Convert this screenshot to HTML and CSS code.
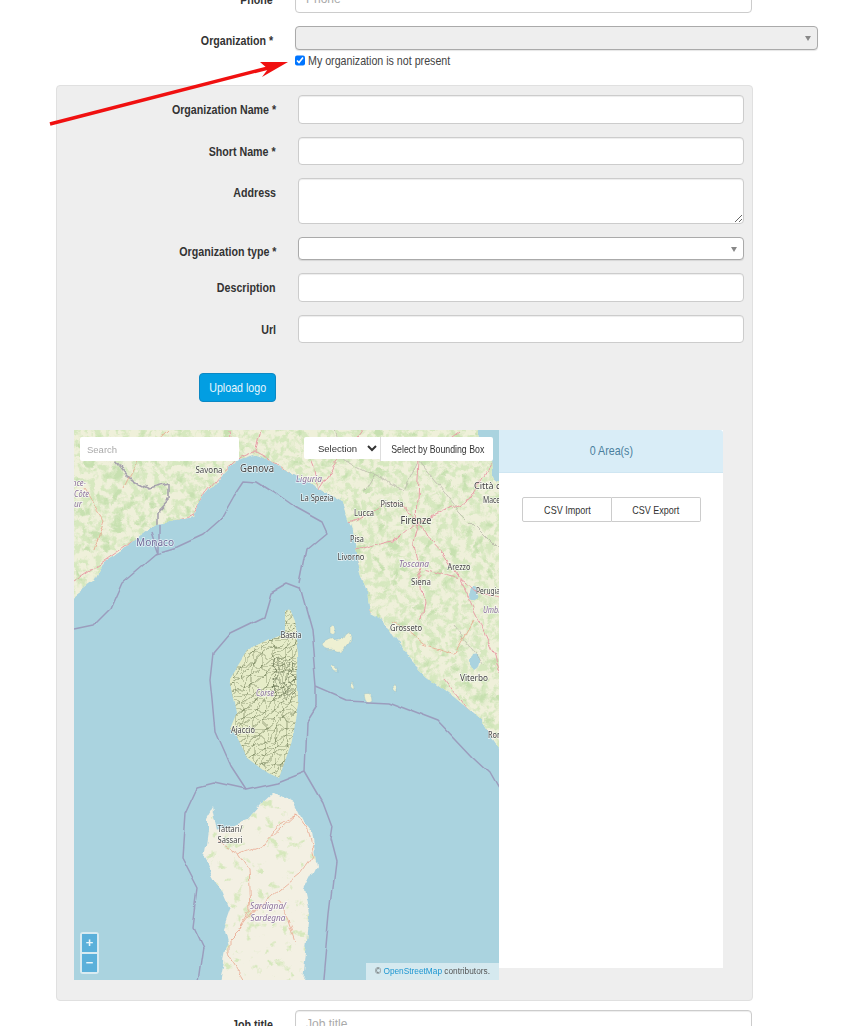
FILE: index.html
```html
<!DOCTYPE html>
<html lang="en">
<head>
<meta charset="utf-8">
<title>Organization form</title>
<link rel="stylesheet" href="styles.css">
</head>
<body>
<form class="page">
  <div class="row">
    <label class="label"><span class="nar">Phone</span></label>
    <input class="field" placeholder="Phone">
  </div>
  <div class="row row-org">
    <label class="label"><span class="nar">Organization *</span></label>
    <div class="org-col">
      <div class="sel sel-disabled"><i class="caret"></i></div>
      <label class="check"><input type="checkbox" checked class="box"><span class="nar nar-left">My organization is not present</span></label>
    </div>
  </div>

  <section class="panel">
    <div class="prow"><label class="label"><span class="nar">Organization Name *</span></label><input class="field field-tall"></div>
    <div class="prow"><label class="label"><span class="nar">Short Name *</span></label><input class="field"></div>
    <div class="prow"><label class="label"><span class="nar">Address</span></label><textarea class="field area"></textarea></div>
    <div class="prow"><label class="label"><span class="nar">Organization type *</span></label><div class="sel"><i class="caret"></i></div></div>
    <div class="prow"><label class="label"><span class="nar">Description</span></label><input class="field field-tall"></div>
    <div class="prow"><label class="label"><span class="nar">Url</span></label><input class="field"></div>
    <div class="upload-row"><button type="button" class="upload"><span class="nar nar-mid">Upload logo</span></button></div>

    <div class="mapwrap">
      <div class="map">
        <svg class="mapsvg" viewBox="0 0 425 550" width="425" height="550">
          <defs>
            <path id="land-n" d="M-10 172L0 167L19 153L29 133L46 123L63 107L83 93L119 87L129 67L146 47L163 30L179 25L199 32L219 45L246 60L269 73L279 100L283 130L293 160L296 183L309 190L319 207L336 230L353 247L379 267L406 290L416 307L425 320L436 332V50L425 50L418 45L416 15L405 12L403 -10H-10Z"/>
            <path id="land-c" d="M214 178L219 190L224 223L225 270L216 313L204 347L193 342L173 327L163 307L156 300L163 283L156 247L173 220L199 207L209 203L209 180Z"/>
            <path id="land-s" d="M199 363L219 373L229 393L238 403L243 437L231 460L236 483L233 510L228 562H144L153 517L149 500L156 480L146 457L129 427L133 400L133 387L139 377L144 400L173 390L186 375Z"/>
            <clipPath id="clip-n"><use href="#land-n"/></clipPath>
            <clipPath id="clip-c"><use href="#land-c"/></clipPath>
            <clipPath id="clip-s"><use href="#land-s"/></clipPath>
            <filter id="mott-fine" filterUnits="userSpaceOnUse" x="-20" y="-20" width="465" height="590" color-interpolation-filters="sRGB">
              <feTurbulence type="fractalNoise" baseFrequency=".14" numOctaves="3" seed="4"/>
              <feColorMatrix values="0 0 0 0 .84  0 0 0 0 .91  0 0 0 0 .75  5 0 0 0 -2.2"/>
            </filter>
            <filter id="mott-big" filterUnits="userSpaceOnUse" x="-20" y="-20" width="465" height="590" color-interpolation-filters="sRGB">
              <feTurbulence type="fractalNoise" baseFrequency=".08" numOctaves="4" seed="9"/>
              <feColorMatrix values="0 0 0 0 .78  0 0 0 0 .88  0 0 0 0 .69  6 0 0 0 -3.5"/>
            </filter>
            <filter id="mott-sparse" filterUnits="userSpaceOnUse" x="-20" y="-20" width="465" height="590" color-interpolation-filters="sRGB">
              <feTurbulence type="fractalNoise" baseFrequency=".1" numOctaves="3" seed="11"/>
              <feColorMatrix values="0 0 0 0 .84  0 0 0 0 .91  0 0 0 0 .74  7 0 0 0 -4.2"/>
            </filter>
            <pattern id="grid" width="10" height="9" patternUnits="userSpaceOnUse">
              <path d="M0 0H10M0 0V9M0 9L10 0" class="mesh"/>
            </pattern>
            <pattern id="grid-fine" width="4" height="4" patternUnits="userSpaceOnUse">
              <path d="M0 0H4M0 0V4" class="mesh mesh-dark"/>
            </pattern>
            <filter id="warp" filterUnits="userSpaceOnUse" x="120" y="150" width="140" height="230" color-interpolation-filters="sRGB">
              <feTurbulence type="fractalNoise" baseFrequency=".06" numOctaves="2" seed="7" result="n"/>
              <feDisplacementMap in="SourceGraphic" in2="n" scale="16" xChannelSelector="R" yChannelSelector="G"/>
            </filter>
            <filter id="coast" filterUnits="userSpaceOnUse" x="-20" y="-20" width="465" height="590" color-interpolation-filters="sRGB">
              <feTurbulence type="fractalNoise" baseFrequency=".05" numOctaves="4" seed="3" result="n"/>
              <feDisplacementMap in="SourceGraphic" in2="n" scale="9" xChannelSelector="R" yChannelSelector="G"/>
            </filter>
            <filter id="bend" filterUnits="userSpaceOnUse" x="-20" y="-20" width="465" height="590" color-interpolation-filters="sRGB">
              <feTurbulence type="fractalNoise" baseFrequency=".018" numOctaves="1" seed="5" result="n"/>
              <feDisplacementMap in="SourceGraphic" in2="n" scale="9" xChannelSelector="R" yChannelSelector="G"/>
            </filter>
          </defs>

          <rect class="sea" width="425" height="550"/>

          <g filter="url(#coast)">
            <use href="#land-n" class="land"/>
            <g clip-path="url(#clip-n)">
              <rect x="-10" y="-10" width="445" height="350" filter="url(#mott-fine)"/>
              <rect x="-10" y="-10" width="445" height="350" filter="url(#mott-big)"/>
              <path class="lake" d="M396 158q6 -3 8 3t-3 9q-7 1 -7 -5zM398 225q7 -2 8 5t-5 10q-6 -2 -6 -8z"/>
              <path class="adm" d="M41 32L53 47L74 58L96 53L96 70L84 83L84 93"/>
              <path class="adm-thin" d="M261 0L270 30L300 45L330 60L345 30L370 60L385 80L400 95M290 62L300 45M400 95L425 120M380 195L395 215L410 235"/>
              <path class="road" d="M0 152L35 128L75 100L119 85L131 63L148 43L165 28L180 22L205 35L222 48L245 62L262 72L275 92M181 22L187 0M160 28L155 0M245 62L240 35L232 15M288 0L262 35L245 60M275 92L292 85L320 72M320 72L345 90L356 110L370 125L386 150L400 160L425 170M345 90L325 108L280 120M345 90L340 115L345 140L350 170L347 190M350 140L385 150L395 170L405 190L420 225L425 245M280 120L290 160L296 183M385 0L345 30L342 90M425 20L395 70L345 90M370 250L410 300L425 310"/>
              <path class="road-thin" d="M96 0L65 30L50 60M20 120L30 90L10 60M320 190L350 215L380 225L400 190"/>
            </g>

            <use href="#land-s" class="land land-s"/>
            <g clip-path="url(#clip-s)">
              <rect x="120" y="350" width="130" height="210" filter="url(#mott-sparse)"/>
              <path class="road-thin" d="M144 412L165 425L190 415L205 395L222 385L235 405L240 425L225 445L200 465L180 480L165 500L155 510L155 525L170 550M165 425L175 440L177 480L165 500M222 385L195 410M205 470L215 490L222 510"/>
            </g>
            <path class="isle" d="M256 197q5 -3 5 4t-5 3zM264 210q-12 1 -16 6q2 6 12 4q8 4 12 -4q6 -6 3 -14q-5 2 -6 6zM258 236q6 1 5 5q-6 0 -5 -5zM276 253q4 0 4 6q-4 0 -4 -6zM318 255q6 2 5 8q-5 -2 -5 -8zM292 264q8 -3 8 6q-6 6 -8 -6z"/>
          </g>

          <g filter="url(#bend)">
            <use href="#land-c" class="land land-c"/>
            <g clip-path="url(#clip-c)">
              <rect x="140" y="170" width="100" height="190" fill="url(#grid)" filter="url(#warp)"/>
              <rect x="198" y="228" width="26" height="40" fill="url(#grid-fine)" filter="url(#warp)"/>
            </g>
          </g>

          <g filter="url(#bend)">
            <path class="border" d="M0 201L19 197L36 180L48 153L83 123L103 117L129 105L146 90L159 67L169 52L183 53L199 63L219 77L246 92L251 103L233 118L226 153"/>
            <path class="border" d="M226 158L213 153L196 163L189 187L156 203L139 223L136 250L138 270L141 303L156 337L171 360L203 353L231 342L233 293L243 277L243 257L238 200L226 157"/>
            <path class="border" d="M231 342L249 373L258 397L256 410L262 433L256 483L249 560"/>
            <path class="border" d="M171 360L139 353L123 357L111 383L108 427L124 458L119 497L129 518L123 560"/>
            <path class="border" d="M243 257L273 270L314 272L366 292L399 327L416 343L435 377"/>
            <path class="border" d="M84 93L84 123M76 100L84 123"/>
          </g>

          <text class="t t-big t-purple" x="81" y="111" textLength="38" lengthAdjust="spacingAndGlyphs">Monaco</text>
          <text class="t t-big" x="183" y="37" textLength="34" lengthAdjust="spacingAndGlyphs">Genova</text>
          <text class="t" x="135" y="39" textLength="27" lengthAdjust="spacingAndGlyphs">Savona</text>
          <text class="t" x="243" y="67" textLength="33" lengthAdjust="spacingAndGlyphs">La Spezia</text>
          <text class="t t-region" x="235" y="48" textLength="26" lengthAdjust="spacingAndGlyphs">Liguria</text>
          <text class="t" x="318" y="73" textLength="23" lengthAdjust="spacingAndGlyphs">Pistoia</text>
          <text class="t" x="290" y="82" textLength="20" lengthAdjust="spacingAndGlyphs">Lucca</text>
          <text class="t t-big" x="342" y="89" textLength="31" lengthAdjust="spacingAndGlyphs">Firenze</text>
          <text class="t" x="283" y="108" textLength="14" lengthAdjust="spacingAndGlyphs">Pisa</text>
          <text class="t" x="277" y="126" textLength="27" lengthAdjust="spacingAndGlyphs">Livorno</text>
          <text class="t t-region" x="340" y="133" textLength="30" lengthAdjust="spacingAndGlyphs">Toscana</text>
          <text class="t" x="385" y="136" textLength="23" lengthAdjust="spacingAndGlyphs">Arezzo</text>
          <text class="t" x="347" y="151" textLength="20" lengthAdjust="spacingAndGlyphs">Siena</text>
          <text class="t t-start" x="402" y="160" textLength="24" lengthAdjust="spacingAndGlyphs">Perugia</text>
          <text class="t t-region t-start" x="409" y="179" textLength="24" lengthAdjust="spacingAndGlyphs">Umbria</text>
          <text class="t t-start" x="400" y="55" textLength="30" lengthAdjust="spacingAndGlyphs">Città di</text>
          <text class="t t-start" x="409" y="69" textLength="30" lengthAdjust="spacingAndGlyphs">Macerata</text>
          <text class="t" x="332" y="197" textLength="32" lengthAdjust="spacingAndGlyphs">Grosseto</text>
          <text class="t" x="400" y="247" textLength="28" lengthAdjust="spacingAndGlyphs">Viterbo</text>
          <text class="t" x="217" y="204" textLength="21" lengthAdjust="spacingAndGlyphs">Bastia</text>
          <text class="t t-region" x="191" y="262" textLength="18" lengthAdjust="spacingAndGlyphs">Corse</text>
          <text class="t" x="169" y="299" textLength="24" lengthAdjust="spacingAndGlyphs">Ajaccio</text>
          <text class="t t-start" x="414" y="304" textLength="20" lengthAdjust="spacingAndGlyphs">Roma</text>
          <text class="t" x="156" y="398" textLength="25" lengthAdjust="spacingAndGlyphs">Tàttari/</text>
          <text class="t" x="156" y="409" textLength="25" lengthAdjust="spacingAndGlyphs">Sassari</text>
          <text class="t t-region" x="194" y="475" textLength="36" lengthAdjust="spacingAndGlyphs">Sardigna/</text>
          <text class="t t-region" x="194" y="487" textLength="35" lengthAdjust="spacingAndGlyphs">Sardegna</text>
          <text class="t t-region t-start t-small" x="-2" y="52" textLength="14" lengthAdjust="spacingAndGlyphs">nce-</text>
          <text class="t t-region t-start t-small" x="0" y="63" textLength="15" lengthAdjust="spacingAndGlyphs">Côte</text>
          <text class="t t-region t-start t-small" x="0" y="73" textLength="8" lengthAdjust="spacingAndGlyphs">ur</text>
        </svg>

        <input class="map-search" placeholder="Search">
        <div class="map-tools">
          <select class="map-select"><option>Selection</option></select>
          <button type="button" class="map-bbox"><span class="nar nar-mid">Select by Bounding Box</span></button>
        </div>
        <div class="zoom">
          <a class="zoom-btn">+</a>
          <a class="zoom-btn">−</a>
        </div>
        <div class="attrib">© <a class="attrib-link">OpenStreetMap</a> contributors.</div>
      </div>

      <aside class="side">
        <div class="side-head"><span class="nar nar-mid">0 Area(s)</span></div>
        <div class="side-body">
          <div class="btn-group">
            <button type="button" class="csv"><span class="nar nar-mid">CSV Import</span></button>
            <button type="button" class="csv"><span class="nar nar-mid">CSV Export</span></button>
          </div>
        </div>
      </aside>
    </div>
  </section>

  <div class="row row-job">
    <label class="label"><span class="nar">Job title</span></label>
    <input class="field" placeholder="Job title">
  </div>
</form>

<svg class="arrow" viewBox="0 0 861 140" width="861" height="140" aria-hidden="true">
  <path class="arrow-line" d="M50 124L272 67"/>
  <path class="arrow-head" d="M288 62L260 62L268 69L262 77Z"/>
</svg>
</body>
</html>
```

FILE: styles.css
```css
* { box-sizing: border-box; }
html, body { margin: 0; height: 1026px; overflow: hidden; background: #fff; }
body { position: relative; font-family: "Liberation Sans", Arial, sans-serif; font-size: 13px; color: #333; }

.page { margin-top: -15px; }

.nar { display: inline-block; transform: scaleX(.82); transform-origin: right center; white-space: nowrap; }
.nar-left { transform-origin: left center; }
.nar-mid { transform-origin: center center; }

.row { display: grid; grid-template-columns: 273px 457px; column-gap: 22px; align-items: start; }
.row-org { margin-top: 13px; grid-template-columns: 273px 523px; }
.row-job { margin-top: 9px; }

.label { display: block; text-align: right; font-weight: 700; height: 24px; line-height: 30px; color: #333; }

.field { display: block; width: 100%; height: 28px; padding: 4px 10px; background: #fff; border: 1px solid #ccc; border-radius: 4px; box-shadow: inset 0 1px 1px rgba(0,0,0,.075); font: 12px "Liberation Sans", sans-serif; outline: none; }
.field::placeholder { color: #aaa; }

.sel { position: relative; height: 24px; background: #fff; border: 1px solid #aaa; border-radius: 4px; box-shadow: 0 1px 1px rgba(0,0,0,.1); }
.sel-disabled { background: #eee; }
.caret { position: absolute; right: 6px; top: 9px; width: 0; height: 0; border-left: 3px solid transparent; border-right: 3px solid transparent; border-top: 5px solid #888; }

.check { display: flex; align-items: center; height: 14px; margin-top: 3px; font-size: 13px; color: #444; }
.box { width: 10px; height: 11px; margin: 0 3px 0 0; flex: none; }

.panel { margin: 18px 0 0 56px; width: 697px; height: 916px; padding: 9px 8px 20px 0; background: #eee; border: 1px solid #e0e0e0; border-radius: 4px; }
.prow { display: grid; grid-template-columns: 219px 446px; column-gap: 22px; align-items: start; margin-bottom: 13px; }
.prow .label { height: 23px; }
.prow .field-tall { height: 29px; }
.prow .area { height: 46px; resize: vertical; }
.prow .sel { height: 23px; }

.upload-row { width: 219px; margin-top: 30px; display: flex; justify-content: flex-end; }
.upload { width: 77px; height: 29px; padding: 0; background: #029ee2; color: #e8f6fd; border: 1px solid #0b88c4; border-radius: 4px; font: 13px "Liberation Sans", sans-serif; }

.mapwrap { display: flex; align-items: flex-start; margin: 28px 0 0 17px; }
.map { position: relative; width: 425px; height: 550px; flex: none; overflow: hidden; background: #aad3df; }
.mapsvg { display: block; }

.sea { fill: #aad3df; }
.land { fill: #eff0da; }
.land-s { fill: #f3f0e3; }
.land-c { fill: #e6ecc8; }
.lake { fill: #aad3df; }
.isle { fill: #eef0d2; stroke: #8fb9c2; stroke-width: .4; }
.adm { fill: none; stroke: #a6a1ad; stroke-width: 1.6; }
.adm-thin { fill: none; stroke: #b6b3a8; stroke-width: .7; }
.road { fill: none; stroke: #e8a0a8; stroke-width: 1; }
.road-thin { fill: none; stroke: #eaa78f; stroke-width: .8; }
.border { fill: none; stroke: #9b9dbd; stroke-width: 1.5; stroke-linejoin: round; }
.mesh { fill: none; stroke: #76835c; stroke-width: .7; }
.mesh-dark { stroke: #4d5a3c; stroke-width: .6; }

.t { font-family: "Noto Sans", sans-serif; font-size: 9px; fill: #444; text-anchor: middle; dominant-baseline: central; paint-order: stroke; stroke: rgba(255,255,255,.7); stroke-width: 1.5px; }
.t-big { font-size: 11px; }
.t-purple { fill: #6f6a99; }
.t-region { font-style: italic; fill: #8a6f9a; }
.t-start { text-anchor: start; }
.t-small { font-size: 8px; }

.map-search { position: absolute; left: 6px; top: 7px; width: 159px; height: 24px; padding: 0 7px; border: 0; border-radius: 2px; background: #fff; font: 9.5px "Liberation Sans", sans-serif; outline: none; }
.map-search::placeholder { color: #aaa; }
.map-tools { position: absolute; left: 230px; top: 7px; display: flex; align-items: flex-start; }
.map-select { width: 76px; height: 22px; padding-left: 10px; background: #fff; border: 0; border-radius: 2px 0 0 2px; font: 9.5px "Liberation Sans", sans-serif; color: #333; }
.map-bbox { width: 113px; height: 24px; padding: 0; background: #fff; border: 0; border-left: 1px solid #ddd; border-radius: 0 2px 2px 0; font: 10.7px "Liberation Sans", sans-serif; color: #333; }

.zoom { position: absolute; left: 6px; bottom: 6px; width: 19px; padding: 2px; border-radius: 3px; background: rgba(255,255,255,.55); display: flex; flex-direction: column; gap: 2px; }
.zoom-btn { display: block; height: 18px; text-align: center; background: #5bb0da; color: #eaf6fb; font: 700 13px/18px "Liberation Sans", sans-serif; }

.attrib { position: absolute; right: 0; bottom: 0; width: 133px; height: 17px; line-height: 17px; padding-left: 9px; background: rgba(255,255,255,.5); font-size: 8.3px; color: #555; white-space: nowrap; }
.attrib-link { color: #1e96d1; }

.side { width: 224px; height: 538px; flex: none; background: #fff; }
.side-head { height: 43px; line-height: 42px; text-align: center; background: #d9edf7; color: #4a7f9d; font-size: 13px; border-bottom: 1px solid #cfe6f2; border-radius: 0 3px 0 0; }
.side-body { padding: 24px 0 0 23px; }
.btn-group { display: flex; width: 179px; }
.csv { flex: 1; height: 25px; padding: 0; background: #fff; border: 1px solid #ccc; font: 11px "Liberation Sans", sans-serif; color: #333; }
.csv:first-child { border-radius: 2px 0 0 2px; }
.csv:last-child { border-left: 0; border-radius: 0 2px 2px 0; }

.arrow { position: absolute; left: 0; top: 0; pointer-events: none; }
.arrow-line { fill: none; stroke: #f01010; stroke-width: 3.4; }
.arrow-head { fill: #f01010; }
```
